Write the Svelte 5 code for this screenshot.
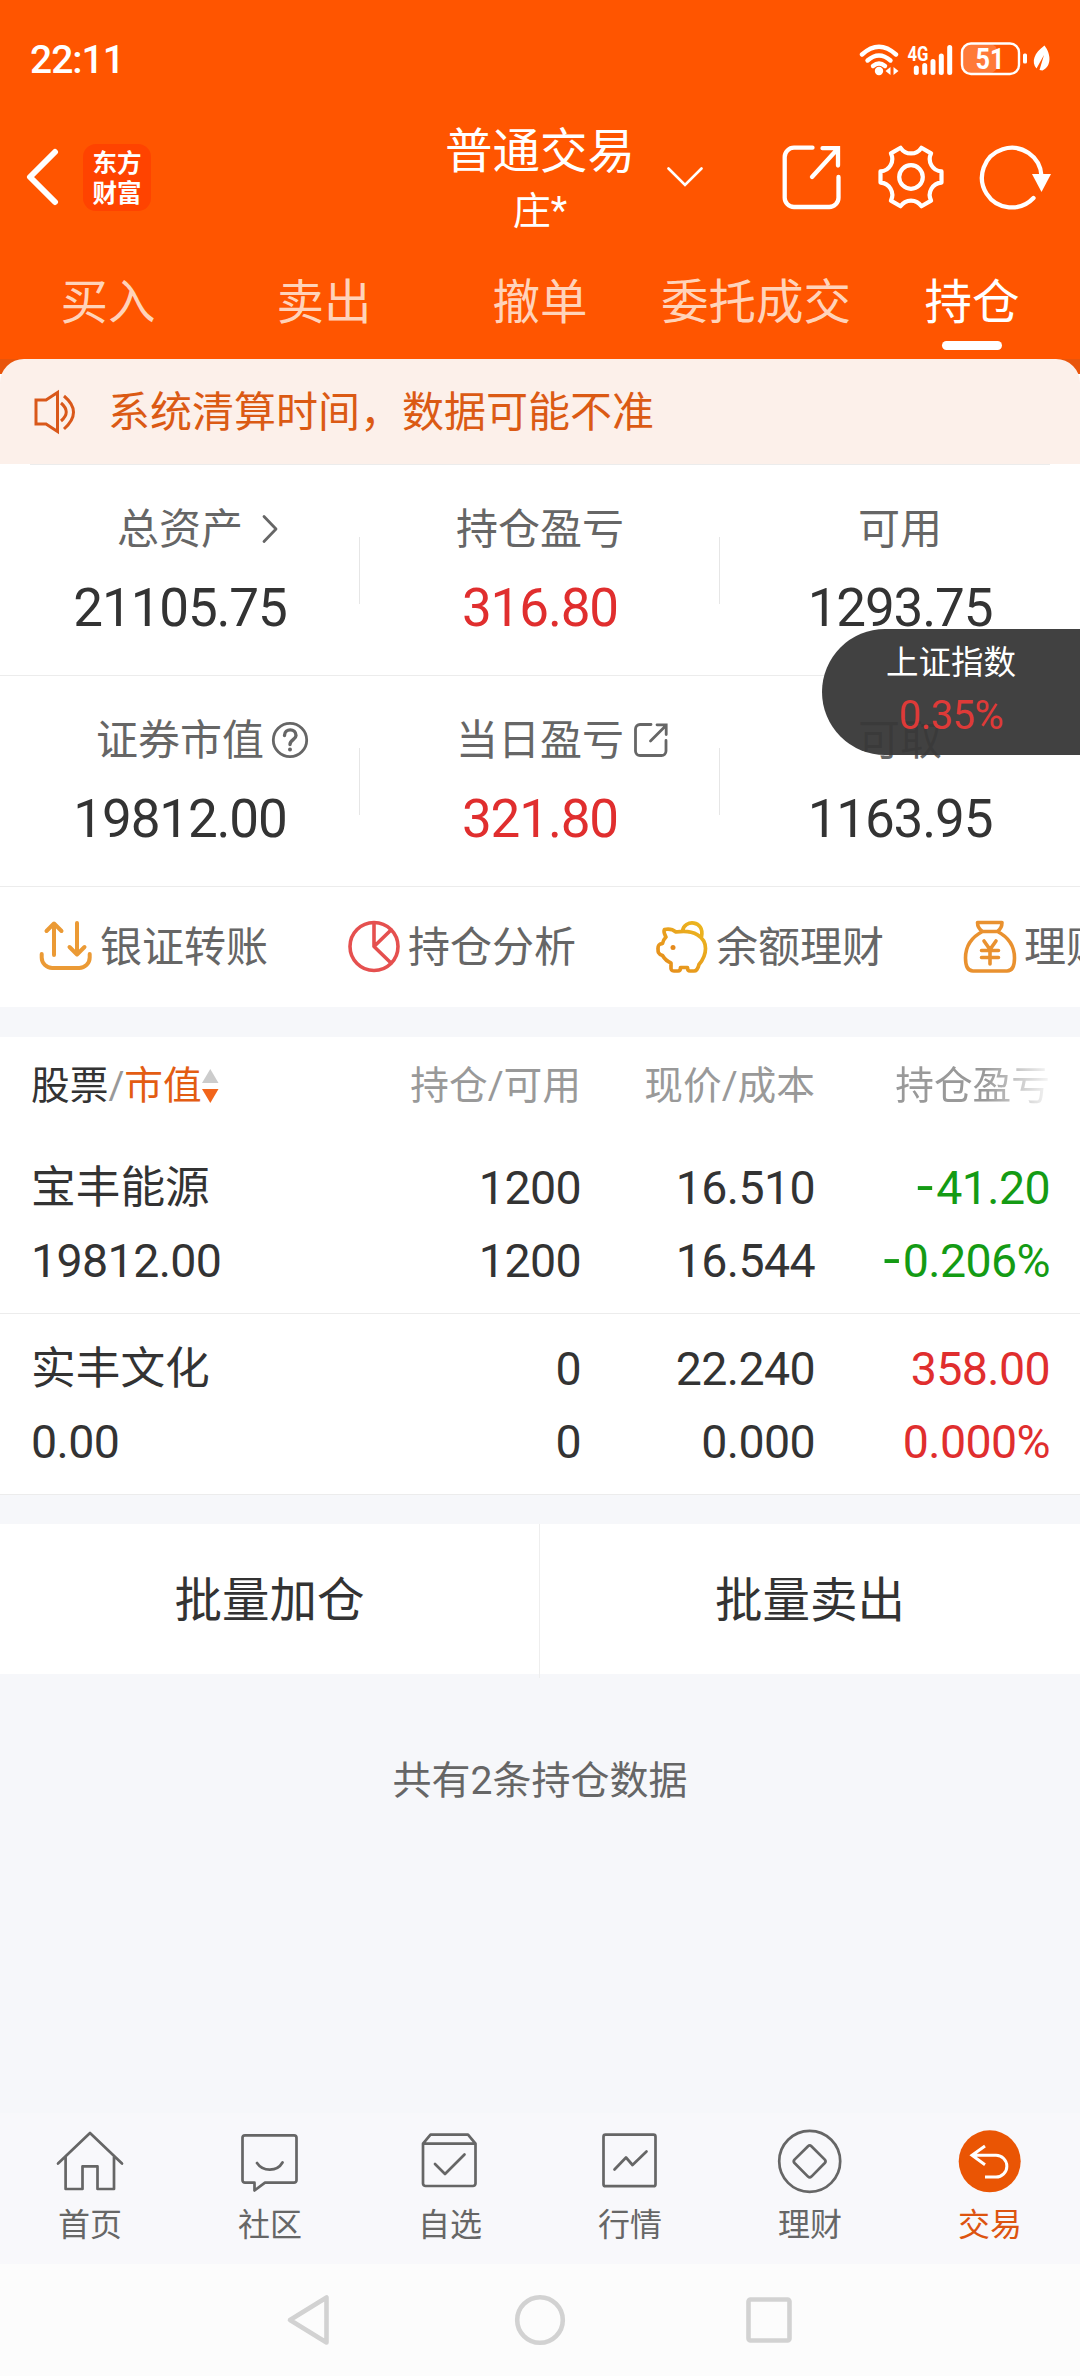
<script>
  const tabs = ['买入', '卖出', '撤单', '委托成交', '持仓'];

  const stats = [
    [
      { label: '总资产', value: '21105.75', icon: 'chevron' },
      { label: '持仓盈亏', value: '316.80', tone: 'up' },
      { label: '可用', value: '1293.75' }
    ],
    [
      { label: '证券市值', value: '19812.00', icon: 'help' },
      { label: '当日盈亏', value: '321.80', tone: 'up', icon: 'open' },
      { label: '可取', value: '1163.95' }
    ]
  ];

  const shortcuts = [
    { icon: 'transfer', label: '银证转账' },
    { icon: 'pie', label: '持仓分析' },
    { icon: 'pig', label: '余额理财' },
    { icon: 'bag', label: '理财产品' }
  ];

  const holdings = [
    { name: '宝丰能源', market: '19812.00', qty: '1200', avail: '1200', price: '16.510', cost: '16.544', minus: true, pnl: '41.20', pct: '0.206%', tone: 'down' },
    { name: '实丰文化', market: '0.00', qty: '0', avail: '0', price: '22.240', cost: '0.000', minus: false, pnl: '358.00', pct: '0.000%', tone: 'up' }
  ];

  const nav = [
    { icon: 'home', label: '首页' },
    { icon: 'chat', label: '社区' },
    { icon: 'box', label: '自选' },
    { icon: 'chart', label: '行情' },
    { icon: 'wealth', label: '理财' },
    { icon: 'trade', label: '交易' }
  ];

  // Six flat lobes joined by concave arcs.
  function gearPath(cx, cy, r, half) {
    const at = (x, y, a) =>
      (cx + x * Math.cos(a) - y * Math.sin(a)).toFixed(2) + ' ' + (cy + x * Math.sin(a) + y * Math.cos(a)).toFixed(2);
    let d = 'M' + at(r, -half, 0);
    for (let k = 0; k < 6; k++) {
      const a = (k * Math.PI) / 3;
      d += 'L' + at(r, half, a) + 'A12.4 12.4 0 0 0 ' + at(r, -half, a + Math.PI / 3);
    }
    return d + 'Z';
  }
  const gear = gearPath(34, 33, 30.5, 5.6);
</script>

<div class="page">
  <header>
    <div class="status">
      <span class="time">22:11</span>
      <svg class="sys" width="194" height="36" viewBox="0 0 194 36" fill="none">
        <g stroke="#fff" stroke-width="4.4" stroke-linecap="round">
          <path d="M4 12.5Q21 -3 38 12.5" />
          <path d="M9.500 18.500Q21 8.500 32.500 18.500" />
          <path d="M15 24Q21 19 27 24" />
        </g>
        <circle cx="21" cy="29" r="4.200" fill="#fff" />
        <path d="M32.500 25v8l-5-4zM35.500 25v8l5-4z" fill="#fff" />
        <text class="net" x="49.500" y="18.500" textLength="21" lengthAdjust="spacingAndGlyphs">4G</text>
        <g stroke="#fff" stroke-width="5" stroke-linecap="round">
          <path d="M58.300 26v4.500M66.700 23.500v7M75 19.500v11M83.300 14v16.500M91.700 5.500v25" />
        </g>
        <rect x="104.500" y="2" width="35" height="29" rx="8" fill="#fff" fill-opacity=".22" />
        <rect x="104" y="1.500" width="57" height="30.500" rx="9" stroke="#fff" stroke-width="2.400" />
        <rect x="165" y="11.500" width="4" height="10" rx="1.500" fill="#fff" />
        <text class="batt" x="132" y="26.500" text-anchor="middle" textLength="29" lengthAdjust="spacingAndGlyphs">51</text>
        <path d="M186.500 3.500C193 12 194 24 184.500 28.500L181.500 28 186 13 178.500 26.500C173 20 176 11 186.500 3.500Z" fill="#fff" />
      </svg>
    </div>

    <div class="bar">
      <div class="left">
        <svg width="34" height="58" viewBox="0 0 34 58" fill="none" stroke="#fff" stroke-width="6" stroke-linecap="round" stroke-linejoin="round"><path d="M29 4 4 29 29 54" /></svg>
        <div class="logo"><span>东方</span><span>财富</span></div>
      </div>
      <div class="title"><h1>普通交易</h1><p>庄*</p></div>
      <div class="tools">
        <svg class="down-icon" width="36" height="22" viewBox="0 0 36 22" fill="none" stroke="#fff" stroke-width="2.600" stroke-linecap="round"><path d="M1.500 2.500 18 19 34.500 2.500" /></svg>
        <svg class="share" width="60" height="66" viewBox="0 0 60 66" fill="none" stroke="#fff" stroke-width="4.300" stroke-linecap="round"><path d="M30.500 3.700H12a9.300 9.300 0 0 0-9.300 9.300V53.700A9.300 9.300 0 0 0 12 63H47.200a9.300 9.300 0 0 0 9.300-9.300V33M30 33 55.500 5M40.500 4.200H56V21.500" /></svg>
        <svg class="gear" width="68" height="66" viewBox="0 0 68 66" fill="none" stroke="#fff" stroke-width="4.200" stroke-linejoin="round"><path d={gear} /><circle cx="34" cy="33" r="11.800" /></svg>
        <svg class="reload" width="74" height="66" viewBox="0 0 74 66" fill="none"><path d="M54.500 54A29.800 29.800 0 1 1 62.500 32" stroke="#fff" stroke-width="4.300" stroke-linecap="round" /><path d="M53 30H72L62.500 48Z" fill="#fff" /></svg>
      </div>
    </div>

    <nav class="tabs">
      {#each tabs as tab, i}
        <span class:active={i === tabs.length - 1}>{tab}</span>
      {/each}
    </nav>
  </header>

  <div class="notice-wrap">
    <div class="notice">
      <svg width="46" height="46" viewBox="0 0 46 46" fill="none" stroke="#d9581a" stroke-width="3"><path d="M4 11H14L25.500 3.500V42.500L14 35H4ZM29 14q10.500 9 0 18M32 7q19 16 0 33" /></svg>
      <span>系统清算时间，数据可能不准</span>
    </div>
  </div>

  <section class="stats">
    {#each stats as row}
      <div class="stat-row">
        {#each row as cell}
          <div class="cell">
            <div class="label">
              {cell.label}
              <span class="after">
                {#if cell.icon === 'chevron'}
                  <svg class="chev" width="16" height="30" viewBox="0 0 16 30" fill="none" stroke="#666" stroke-width="2.800" stroke-linecap="round" stroke-linejoin="round"><path d="M2 2.500 14 15 2 27.500" /></svg>
                {:else if cell.icon === 'help'}
                  <svg width="38" height="38" viewBox="0 0 38 38" fill="none" stroke="#666" stroke-width="2.800" stroke-linecap="round"><circle cx="19" cy="19" r="16.700" /><path stroke-width="3.400" d="M13.500 14.500c0-7.500 11.500-7.500 11.500 0 0 4-6 4.500-6 9" /><circle cx="19" cy="28.500" r="2" fill="#666" stroke="none" /></svg>
                {:else if cell.icon === 'open'}
                  <svg class="open" width="36" height="36" viewBox="0 0 36 36" fill="none" stroke="#666" stroke-width="2.800" stroke-linecap="round"><path d="M18 2.500H7A4.500 4.500 0 0 0 2.500 7V29A4.500 4.500 0 0 0 7 33.500H28.500A4.500 4.500 0 0 0 33 29V18.500M17.500 19 32.500 4M24 2.800H33.200V12.500" /></svg>
                {/if}
              </span>
            </div>
            <div class="value {cell.tone ?? ''}">{cell.value}</div>
          </div>
        {/each}
      </div>
    {/each}
  </section>

  <section class="shortcuts">
    {#each shortcuts as s}
      <div class="shortcut">
        <svg width="56" height="54" viewBox="0 0 56 54" fill="none" stroke-linecap="round" stroke-linejoin="round">
          {#if s.icon === 'transfer'}
            <path stroke="#eb9a35" stroke-width="4" d="M16 3.500V35M8.500 11l7.500-7.500 7.500 7.500M39 3V34M31.500 27l7.500 7.500 7.500-7.500M3.700 34v3.500a10.500 10.500 0 0 0 10.500 10.500h27a10.500 10.500 0 0 0 10.500-10.500V34" />
          {:else if s.icon === 'pie'}
            <g stroke="#e5504f" stroke-width="3.600"><circle cx="28" cy="26.500" r="24" /><path d="M28 3V26.500L45 10M28 26.500 45 43" /></g>
          {:else if s.icon === 'pig'}
            <defs><linearGradient id="pig" x1="0" y1="1" x2="1" y2="0"><stop offset="0" stop-color="#e58a1c" /><stop offset="1" stop-color="#ecb81f" /></linearGradient></defs>
            <path stroke="url(#pig)" stroke-width="3.700" d="M10.500 9.500C15 8.500 19 9.500 22 12 40 9 51.500 17 51.500 28.500 51.500 36 48 41 45 44.500Q43.500 51 40 51H36Q33.500 51 33.500 47.500H26.500Q26.500 51 24 51H20Q16.500 51 17 47V43C12 41 10 38 8.500 35.500 4 34 4 32 4 28.500 4 24 6 24 8.500 23.500 9 20.500 10 19 12 17 10.500 14 9 12 10.500 9.500ZM28.500 11C30 -1 51 0 47.500 16.500" />
            <circle cx="19" cy="27.500" r="2.500" fill="#e58a1c" />
          {:else}
            <path stroke="#e9912f" stroke-width="3.600" d="M15.500 2.500H40Q40 8 35.500 11.500H20.500Q15.500 8 15.500 2.500ZM20.500 11.500C8 18 3.500 27 3.500 38 3.500 46 6 51 11 51H45C50 51 52.500 46 52.500 38 52.500 27 48 18 35.500 11.500M22 21 28 29.500 34 21M28 29.500V44M19.500 30.500H36.500M19.500 37.500H36.500" />
          {/if}
        </svg>
        <span>{s.label}</span>
      </div>
    {/each}
  </section>

  <section class="table">
    <div class="thead">
      <div class="sort">
        <span class="dark">股票</span><span>/</span><span class="accent">市值</span>
        <svg width="17" height="36" viewBox="0 0 17 36"><path d="M8.300 1 16.500 15H0Z" fill="#ccc" /><path d="M0 21H16.500L8.300 35Z" fill="#f2651a" /></svg>
      </div>
      <div>持仓/可用</div>
      <div>现价/成本</div>
      <div class="fade">持仓盈亏</div>
    </div>
    {#each holdings as h}
      <div class="trow">
        <div class="first"><b>{h.name}</b><b>{h.market}</b></div>
        <div><b>{h.qty}</b><b>{h.avail}</b></div>
        <div><b>{h.price}</b><b>{h.cost}</b></div>
        <div class={h.tone}>
          <b>{#if h.minus}<i>-</i>{/if}{h.pnl}</b>
          <b>{#if h.minus}<i>-</i>{/if}{h.pct}</b>
        </div>
      </div>
    {/each}
  </section>

  <section class="batch">
    <span>批量加仓</span>
    <span>批量卖出</span>
  </section>

  <p class="summary">共有2条持仓数据</p>

  <footer class="tabbar">
    {#each nav as item}
      <div class="item" class:current={item.icon === 'trade'}>
        <svg width="72" height="66" viewBox="0 0 72 66" fill="none" stroke="#666" stroke-width="2.700" stroke-linecap="round" stroke-linejoin="round">
          {#if item.icon === 'home'}
            <path d="M4 34.500 36 4 68 34.500M11.600 28V60H28.500V37.300H43.500V60H60V28" />
          {:else if item.icon === 'chat'}
            <path d="M11 6.300H60A2.500 2.500 0 0 1 62.500 8.800V51.200A2.500 2.500 0 0 1 60 53.700H31L20.500 61.500V53.700H11A2.500 2.500 0 0 1 8.500 51.200V8.800A2.500 2.500 0 0 1 11 6.300ZM23 34C29 43 43 43 48.500 33.500" />
          {:else if item.icon === 'box'}
            <path d="M9 14.700 16.500 5.700H54L61.500 14.700V54.500A2.500 2.500 0 0 1 59 57H11.500A2.500 2.500 0 0 1 9 54.500ZM9 14.700H61.500M21 35 31 45 50.500 25.500" />
          {:else if item.icon === 'chart'}
            <rect x="9.500" y="5.700" width="52" height="51.500" rx="2" /><path d="M20.500 40.500 32 28.500 38.500 36 52.500 22.500" />
          {:else if item.icon === 'wealth'}
            <circle cx="35.700" cy="32.300" r="30.500" /><path d="M34 17.200 20.500 30.600Q19 32.300 20.500 34L34 47.600Q35.700 49.200 37.400 47.600L50.800 34Q52.300 32.300 50.800 30.600L37.400 17.200Q35.700 15.600 34 17.200Z" />
          {:else}
            <circle cx="35.700" cy="32.300" r="31" fill="#ea5504" stroke="none" /><path stroke="#fff" stroke-width="3" stroke-linecap="butt" stroke-linejoin="miter" d="M31 17 18 26.300 31 35.700M18 26.300H42a10.800 10.800 0 0 1 0 21.700H31" />
          {/if}
        </svg>
        <span>{item.label}</span>
      </div>
    {/each}
  </footer>

  <div class="sysnav">
    <svg width="60" height="60" viewBox="0 0 60 60"><path d="M46.500 7.500V52.500L10 30Z" /></svg>
    <svg width="60" height="60" viewBox="0 0 60 60"><circle cx="30" cy="30" r="22.800" /></svg>
    <svg width="60" height="60" viewBox="0 0 60 60"><rect x="8.500" y="9.500" width="41" height="41" rx="2" /></svg>
  </div>

  <aside class="index">
    <span>上证指数</span>
    <strong>0.35%</strong>
  </aside>
</div>

<style>
  :global(body) { margin: 0; }
  .page {
    position: relative;
    display: flex;
    flex-direction: column;
    width: 1080px;
    height: 2376px;
    overflow: hidden;
    background: #f6f7fa;
    color: #333;
    font-family: Roboto, 'Noto Sans CJK SC', sans-serif;
  }
  svg { display: block; flex: none; }
  h1, p { margin: 0; font-weight: 400; }

  header { height: 359px; background: #f50; color: #fff; }
  .status { display: flex; justify-content: space-between; align-items: center; height: 119px; padding: 0 24px 0 30px; box-sizing: border-box; }
  .time { font-size: 39px; font-weight: 500; letter-spacing: -1px; line-height: 60px; }
  .sys { margin-right: 4px; }
  .net { font: 700 20px Roboto, sans-serif; fill: #fff; }
  .batt { font: 700 29px Roboto, sans-serif; fill: #fff; }

  .bar { display: grid; grid-template-columns: 444px 192px 1fr; grid-template-rows: 116px; align-items: center; height: 116px; }
  .left { display: flex; align-items: center; gap: 23px; padding-left: 26px; }
  .logo { display: flex; flex-direction: column; align-items: center; justify-content: center; gap: 6px; width: 68px; height: 67px; border-radius: 13px; background: #ff4300; font-family: 'Noto Sans CJK SC', sans-serif; font-size: 24.500px; font-weight: 700; }
  .logo span { line-height: 24.500px; }
  .title { align-self: start; padding-top: 1px; text-align: center; white-space: nowrap; }
  .title h1 { font-size: 47.500px; line-height: 64px; }
  .title p { font-size: 38px; line-height: 54px; }
  .tools { display: flex; align-items: center; padding-left: 31px; }
  .share { margin-left: 79px; }
  .gear { margin-left: 35px; }
  .reload { margin-left: 34px; }

  .tabs { display: grid; grid-template-columns: repeat(5, 216px); height: 124px; }
  .tabs span { display: flex; flex-direction: column; align-items: center; padding-top: 38px; font-size: 47.500px; line-height: 60px; color: #ffd3ba; }
  .tabs .active { color: #fff; }
  .tabs .active::after { content: ''; width: 60px; height: 9px; margin-top: 8px; border-radius: 5px; background: #fff; }

  .notice-wrap { height: 105px; background: linear-gradient(#e9550b 15px, #fff 15px); }
  .notice { display: flex; align-items: center; gap: 30px; height: 105px; padding-left: 32px; border-radius: 24px 24px 0 0; background: #fcf0ea; color: #db5a14; font-size: 42px; line-height: 60px; }
  .notice span { padding-top: 2px; }

  .stats { height: 423px; background: #fff; }
  .stats::before { content: ''; display: block; height: 1px; margin: 0 30px; background: #ececec; }
  .stat-row { display: grid; grid-template-columns: repeat(3, 360px); height: 210px; border-bottom: 1px solid #ececec; }
  .cell { position: relative; display: flex; flex-direction: column; align-items: center; padding-top: 35px; }
  .cell + .cell::before { content: ''; position: absolute; left: -1px; top: 72px; width: 1px; height: 67px; background: #e6e6e6; }
  .label { display: flex; align-items: center; font-size: 42px; line-height: 60px; color: #666; }
  .after { display: flex; width: 0; overflow: visible; }
  .after svg { margin-left: 7px; margin-top: -2px; }
  .after .chev { margin-left: 19px; }
  .after .open { margin-left: 9px; }
  .value { margin-top: 18px; font-size: 53px; line-height: 60px; letter-spacing: -1.150px; }
  .up { color: #e02e2e; }
  .down { color: #149b14; }

  .shortcuts { display: flex; height: 120px; padding-left: 38px; background: #fff; overflow: hidden; }
  .shortcut { flex: none; display: flex; align-items: center; gap: 6px; width: 308px; font-size: 42px; line-height: 60px; color: #666; }
  .shortcut span { padding-top: 1px; }

  .table { margin-top: 30px; background: #fff; }
  .thead, .trow { display: grid; grid-template-columns: 300px 250px 234px 235px; padding-left: 31px; text-align: right; }
  .thead { height: 96px; font-size: 38.700px; line-height: 98px; color: #999; }
  .sort { display: flex; align-items: center; }
  .dark { color: #333; }
  .accent { color: #e35c12; }
  .fade { justify-self: end; -webkit-mask-image: linear-gradient(90deg, #000 58%, rgba(0, 0, 0, 0.08)); mask-image: linear-gradient(90deg, #000 58%, rgba(0, 0, 0, 0.08)); }
  .trow { height: 180px; border-bottom: 1px solid #ececec; }
  .trow > div { padding-top: 19px; }
  b { display: block; height: 73px; font-size: 46.500px; line-height: 73px; font-weight: 400; letter-spacing: -0.600px; }
  .trow .first { text-align: left; }
  .first b:first-child { font-size: 44.700px; letter-spacing: 0; }
  i { font-style: normal; font-family: 'Noto Sans CJK SC', sans-serif; font-size: 56px; margin-right: 2px; line-height: 0; }

  .batch { display: grid; grid-template-columns: 540px 540px; height: 150px; margin-top: 29px; background: #fff; }
  .batch span { text-align: center; font-size: 47.500px; line-height: 154px; }
  .batch span:first-child { border-right: 1px solid #eee; }

  .summary { margin-top: 77px; text-align: center; font-size: 39px; line-height: 60px; color: #666; }

  .tabbar { display: grid; grid-template-columns: repeat(6, 180px); height: 151px; margin-top: auto; padding-top: 16px; box-sizing: border-box; background: #f8f8fb; }
  .item { display: flex; flex-direction: column; align-items: center; color: #666; font-size: 32px; line-height: 44px; }
  .item span { margin-top: 8px; }
  .current { color: #dd5410; }

  .sysnav { display: flex; justify-content: center; gap: 170px; height: 112px; padding-top: 26px; box-sizing: border-box; background: #fcfcfc; }
  .sysnav svg { fill: none; stroke: #d2d2d2; stroke-width: 4.600; stroke-linejoin: round; }

  .index { position: absolute; right: 0; top: 629px; display: flex; flex-direction: column; align-items: center; width: 258px; height: 126px; padding-top: 10px; box-sizing: border-box; border-radius: 63px 0 0 63px; background: rgba(56, 56, 56, 0.955); color: #fff; font-size: 32.500px; line-height: 48px; }
  .index strong { font-weight: 400; font-size: 40px; line-height: 58px; letter-spacing: -0.600px; color: #de3a38; }
</style>
